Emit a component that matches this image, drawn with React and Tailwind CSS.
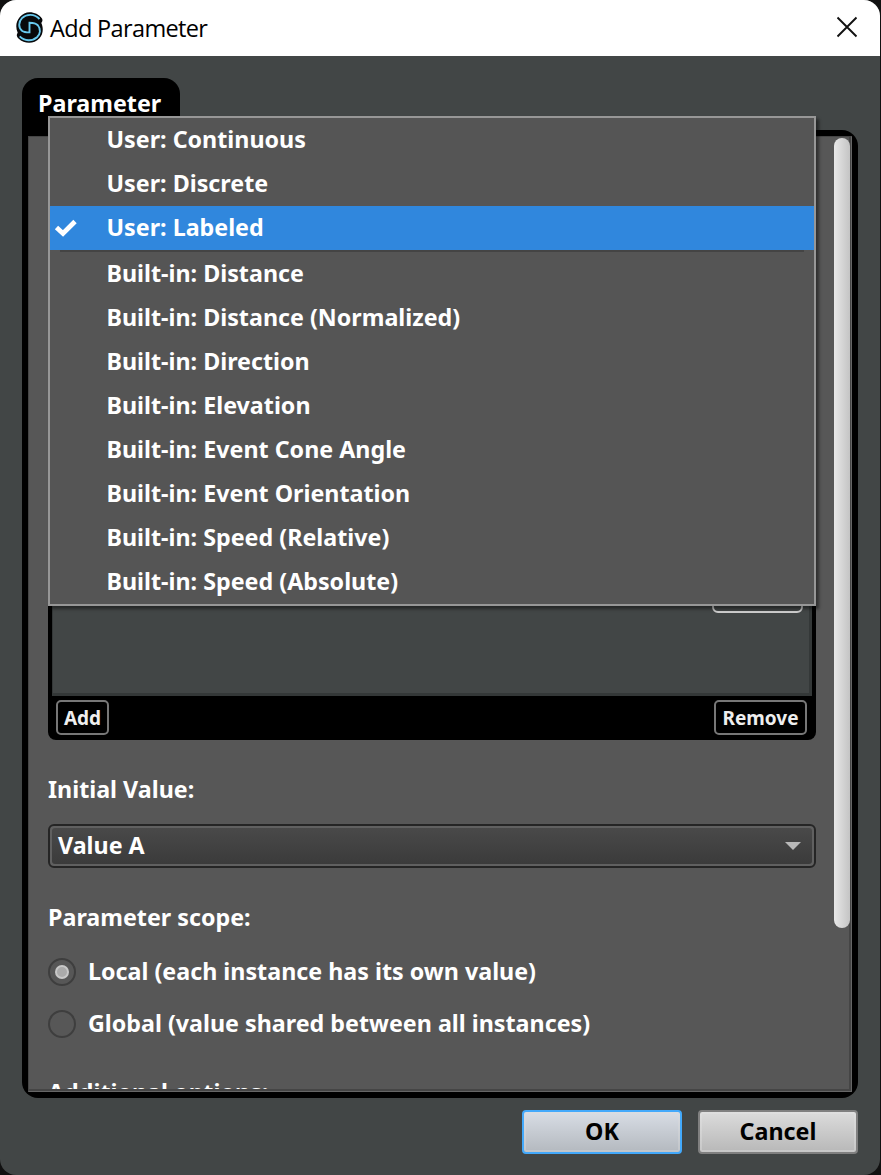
import React, { useState } from 'react';

const userTypes = ['User: Continuous', 'User: Discrete', 'User: Labeled'];

const builtInTypes = [
  'Built-in: Distance',
  'Built-in: Distance (Normalized)',
  'Built-in: Direction',
  'Built-in: Elevation',
  'Built-in: Event Cone Angle',
  'Built-in: Event Orientation',
  'Built-in: Speed (Relative)',
  'Built-in: Speed (Absolute)',
];

const scopes = [
  { id: 'local', label: 'Local (each instance has its own value)' },
  { id: 'global', label: 'Global (value shared between all instances)' },
];

const Logo = () => (
  <svg width="28" height="32" viewBox="0 0 28 32" fill="none" className="shrink-0">
    <path
      d="M14.500 0.300C19.500 0.300 24 2.500 27 6.500C27.800 8 27.600 9.500 26.300 11C28.600 16 28.300 22 24.500 26.300C19 32.300 9.500 32.300 3.500 26.500C1.500 24.500 1.300 22.800 2.700 20.700C0.300 15.500 0.900 9.500 4.800 5C7.500 2 11 0.300 14.500 0.300Z"
      fill="#08090b"
    />
    <path
      d="M24.500 7C19.500 1.700 11.500 1.700 7 6.200C3.300 10 3.300 15.500 7 18.700C9 20.300 11.500 20.400 14.500 20.400V10.800C18.500 10.800 21 11.400 23 13.500C26 17 25.500 22 22 25.200C17 29.500 9.500 29.200 4.700 24.300"
      stroke="#68c9ee"
      strokeWidth="1.900"
    />
  </svg>
);

const TypeMenu = ({ selected, onSelect }) => {
  const renderItem = (name) => (
    <button
      key={name}
      onClick={() => onSelect(name)}
      className={`flex h-11 w-full items-center text-left ${selected === name ? 'bg-[#3087dd]' : ''}`}
    >
      <span className="flex w-[56.500px] shrink-0 pl-1">
        {selected === name && (
          <svg width="24" height="22" viewBox="0 0 24 22" fill="none">
            <path d="M2.500 10.500L9 16.500L21 4.500" stroke="#fff" strokeWidth="4.800" />
          </svg>
        )}
      </span>
      <span className="whitespace-nowrap pb-0.5">{name}</span>
    </button>
  );

  return (
    <div className="absolute left-5 -top-5 z-10 h-[490px] w-[768px] border-2 border-[#979797] bg-[#555555] shadow-[3px_3px_3px_rgba(0,0,0,0.45)]">
      {userTypes.map(renderItem)}
      <div className="mx-2.5 h-0.5 bg-[#444444]" />
      {builtInTypes.map(renderItem)}
    </div>
  );
};

const App = () => {
  const [type, setType] = useState('User: Labeled');
  const [scope, setScope] = useState('local');

  return (
    <div className="h-[1175px] w-[881px] overflow-hidden bg-[#111111] pr-px font-['Noto_Sans','Open_Sans',sans-serif] text-[23.280px] font-bold leading-8 text-white">
      <div className="flex h-full flex-col overflow-hidden rounded-2xl bg-[#424646]">
        <header className="flex h-14 shrink-0 items-center bg-white pl-[15px] pr-[22px] text-black">
          <Logo />
          <h1 className="ml-[7px] grow font-['Open_Sans',sans-serif] text-[23.500px] font-normal tracking-[-0.65px]">
            Add Parameter
          </h1>
          <button aria-label="Close">
            <svg width="22" height="22" viewBox="0 0 22 22" className="-mt-0.5">
              <path d="M1.500 1.500L20.500 20.500M20.500 1.500L1.500 20.500" stroke="#111" strokeWidth="1.900" />
            </svg>
          </button>
        </header>

        <main className="px-[22px] pt-[22px]">
          <div className="h-[52px] w-[158px] rounded-t-2xl bg-black pl-4 pt-[9px]">Parameter</div>

          <div className="h-[968px] rounded-b-[16px] rounded-tr-[16px] bg-black p-1.5">
            <div className="relative h-full">
              <TypeMenu selected={type} onSelect={setType} />

              <div className="flex h-full border border-[#454545] border-r-[#666] border-b-[#666] bg-[#575757]">
                <div className="h-[954px] w-[805px] shrink-0 overflow-hidden border-b-2 border-[#454545] pl-[19px] pr-[18px]">
                  {/* labeled values list */}
                  <div className="mt-[363px] h-60 w-[768px] rounded-b-lg bg-black px-1">
                    <div className="h-[196px] border border-r-[3px] border-b-[3px] border-[#343838] bg-[#424646]">
                      <div className="ml-auto mr-1.5 mt-[77px] h-[35px] w-[91px] rounded-[6px] border-2 border-[#cccccc]" />
                    </div>
                    <div className="flex justify-between pt-1 pl-1 pr-[5px] text-[19px] leading-[31px] text-[#eeeeee]">
                      <button className="h-[35px] w-[53px] rounded-[5px] border-2 border-[#777777] pt-px">Add</button>
                      <button className="h-[35px] w-[93px] rounded-[5px] border-2 border-[#777777] pt-px">Remove</button>
                    </div>
                  </div>

                  <h2 className="mt-[33px]">Initial Value:</h2>
                  <div className="mt-[19px] w-[768px] rounded-[6px] border-2 border-[#252525] bg-[#606060] p-0.5">
                    <div className="flex h-9 items-center justify-between rounded-[3px] bg-linear-to-b from-[#494949] to-[#3b3b3b] pl-1.5 pr-[11px]">
                      <span className="pb-0.5">Value A</span>
                      <svg width="16" height="8" viewBox="0 0 16 8">
                        <path d="M0 0H16L8 8Z" fill="#b9b9b9" />
                      </svg>
                    </div>
                  </div>

                  <h2 className="mt-[33px]">Parameter scope:</h2>
                  {scopes.map((item) => (
                    <button
                      key={item.id}
                      onClick={() => setScope(item.id)}
                      className="mt-[18px] flex h-[34px] items-center whitespace-nowrap first-of-type:mt-[22px]"
                    >
                      <span className="mr-3 flex size-7 items-center justify-center rounded-full border-2 border-[#3e3e3e]">
                        {scope === item.id && (
                          <span className="size-3.5 rounded-full border-2 border-[#c8c8c8] bg-[#aaaaaa]" />
                        )}
                      </span>
                      <span className="pb-0.5">{item.label}</span>
                    </button>
                  ))}

                  <h2 className="mt-[35px]">Additional options:</h2>
                </div>

                <div className="grow border-r-2 border-b-2 border-[#454545] pt-px">
                  <div className="-mr-px h-[790px] w-4 rounded-full bg-linear-to-r from-[#e8e8e8] to-[#c4c4c4]" />
                </div>
              </div>
            </div>
          </div>
        </main>

        <footer className="flex justify-end gap-4 pt-3 pr-[22px] text-black">
          <button className="h-11 w-40 rounded-[4px] border-2 border-[#43a9fb] bg-linear-to-b from-[#d8dde5] to-[#b4b9bf] pb-0.5 shadow-[inset_0_0_0_2px_rgba(220,220,220,0.35)]">
            OK
          </button>
          <button className="h-11 w-40 rounded-[4px] border-2 border-[#808080] bg-linear-to-b from-[#dcdcdc] to-[#b8b8b8] pb-0.5 shadow-[inset_0_0_0_2px_rgba(230,230,230,0.35)]">
            Cancel
          </button>
        </footer>
      </div>
    </div>
  );
};

export default App;
